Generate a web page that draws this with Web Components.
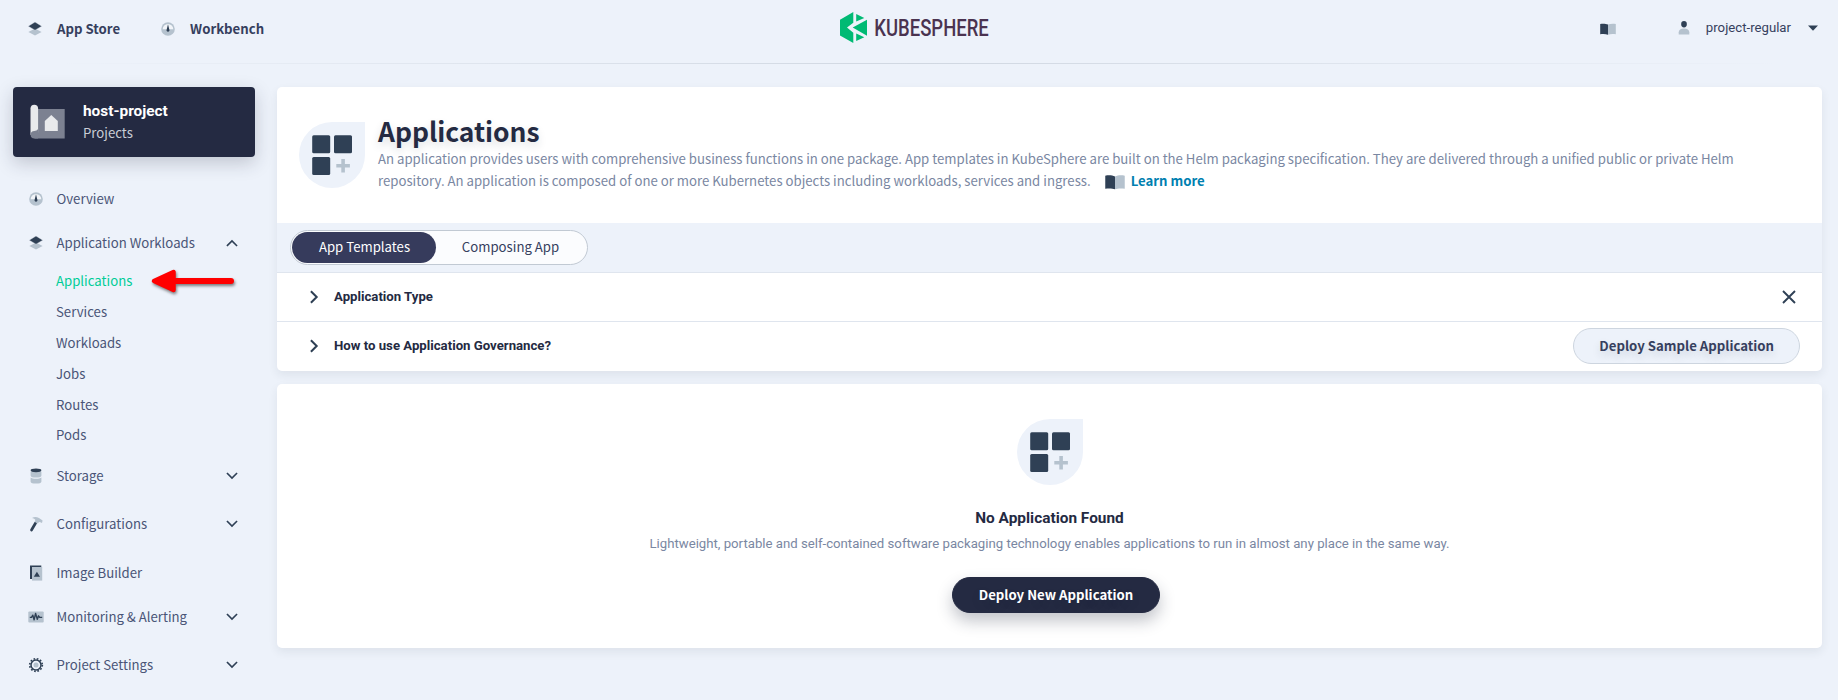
<!DOCTYPE html>
<html lang="en">
<head>
<meta charset="utf-8">
<title>Applications - KubeSphere</title>
<style>
html, body { margin: 0; height: 100%; }
body { background: #edf2fa; overflow: hidden; --noto: "Noto Sans CJK SC", sans-serif; --roboto: Roboto, sans-serif; }
</style>
</head>
<body>
<ks-app></ks-app>
<script>
const D = '#2f4055', L = '#b5c2ce';
const ICONS = {
  layers: [16, `<path d="M8 7.4 14.6 11 8 14.6 1.4 11z" fill="${L}"/><path d="M8 1 14.8 5.2 8 9.2 1.2 5.2z" fill="${D}" stroke="#edf2fa" stroke-width=".4"/>`],
  gauge: [16, `<circle cx="8" cy="8" r="6.8" fill="${L}"/><path d="M2.700 8.300a5.300 5.300 0 0 1 10.600 0z" fill="#f2f5f9"/><path d="M8 3.200 9.300 8.600a1.500 1.500 0 1 1-2.600 0z" fill="${D}"/>`],
  storage: [16, `<path d="M2.600 3.600v4.200c0 1.300 2.300 1.800 5.400 1.800s5.400-.5 5.400-1.800V3.600z" fill="${L}"/><path d="M2.600 9.500c1 .9 3 1.200 5.400 1.200s4.400-.3 5.400-1.200v4.200c0 1.200-2.200 1.900-5.400 1.900s-5.400-.7-5.400-1.900z" fill="${L}"/><ellipse cx="8" cy="2.300" rx="5.400" ry="1.900" fill="${D}"/>`],
  hammer: [16, `<path d="M3.500 14 7.600 7" stroke="${D}" stroke-width="2.700" stroke-linecap="round"/><path d="M4 2c2-1.400 4.600-1.300 7 0l3.600 2.600-.6 2.300-1.600-.6-1.200-.2-1.700 1.400-2.700-1.500.5-2.300C6.300 2.600 5.200 2.300 4 2z" fill="${L}"/>`],
  image: [16, `<path d="M2 .4h11.300v2H4v11.600H2z" fill="${D}"/><path d="M4 2h10.200v13.600H4z" fill="${L}"/><path d="M8.900 6.700l3.100 5H5.800z" fill="${D}"/>`],
  monitor: [16, `<rect x=".3" y="2.400" width="15.400" height="11.200" rx="1" fill="${L}"/><path d="M1.800 8.400h1.700l1.300-2.200 1.300 4.600 1.500-6.400 1.700 6 1.200-3.600 1.200 1.600h2.500" fill="none" stroke="${D}" stroke-width="1.400" stroke-linejoin="round"/>`],
  gear: [16, `<circle cx="8" cy="8" r="6.300" fill="none" stroke="${D}" stroke-width="1.700" stroke-dasharray="1.650 1.650"/><circle cx="8" cy="8" r="5" fill="none" stroke="${D}" stroke-width="1.500"/><circle cx="8" cy="8" r="2.500" fill="${L}"/>`],
  book: [16, `<path d="M.2 2.900C3 2.500 6 2.600 8 3.600v10.200c-2-.8-5-.8-7.800-.5z" fill="${D}"/><path d="M15.800 2.900C13 2.500 10 2.600 8 3.600v10.200c2-.8 5-.8 7.800-.5z" fill="${L}"/>`],
  user: [16, `<rect x="5.200" y="1" width="5.600" height="6.400" rx="2.800" fill="${D}"/><path d="M2.700 14.500v-2.300c0-2.300 2-3.700 5.300-3.700s5.300 1.400 5.300 3.700v2.300z" fill="${L}"/>`],
  down: [16, `<path d="M3.500 5.600 8 10.100l4.500-4.500" fill="none" stroke="${D}" stroke-width="1.600" stroke-linecap="square"/>`],
  up: [16, `<path d="M3.500 10.400 8 5.900l4.500 4.500" fill="none" stroke="${D}" stroke-width="1.600" stroke-linecap="square"/>`],
  right: [16, `<path d="M4.900 2.200 10.700 8l-5.800 5.800" fill="none" stroke="${D}" stroke-width="2"/>`],
  close: [16, `<path d="M2 2l12 12M14 2 2 14" fill="none" stroke="${D}" stroke-width="1.900"/>`],
  caret: [16, `<path d="M3 5.600h10L8 10.800z" fill="${D}"/>`],
  project: [36, `<path d="M9 5h26.700v29.600H5.500z" fill="#7c8191"/><path d="M1.500 31V4.500a3.800 3.800 0 0 1 7.600 0v24z" fill="#e9eaec"/><path d="M9.100 25v9.600H5.400A3.800 3.800 0 0 1 5.400 27a4.600 4.600 0 0 0 3.700-2z" fill="#7c8191"/><path d="M22.300 11 28.800 17v10H15.800V17z" fill="#e9eaec"/>`],
  app: [44, `<g fill="${D}"><rect x="2.200" y="2.200" width="18" height="18" rx="1.500"/><rect x="24" y="2.200" width="18" height="18" rx="1.500"/><rect x="2.200" y="24" width="18" height="18" rx="1.500"/></g><path d="M31.300 26h3.600v5h5v3.600h-5v5h-3.600v-5h-5V31h5z" fill="${L}"/>`]
};
function define(name, html) {
  customElements.define(name, class extends HTMLElement {
    constructor() {
      super();
      const t = document.createElement('template');
      t.innerHTML = typeof html === 'function' ? html(this) : html;
      this.attachShadow({ mode: 'open' }).append(t.content.cloneNode(true));
    }
  });
}
const attr = (el, n, d = '') => el.getAttribute(n) || d;

customElements.define('ks-icon', class extends HTMLElement {
  connectedCallback() {
    if (this.shadowRoot) return;
    const [box, body] = ICONS[attr(this, 'name')], s = attr(this, 'size', '16');
    this.attachShadow({ mode: 'open' }).innerHTML =
      `<style>:host{display:inline-block;flex:none;width:${s}px;height:${s}px}svg{display:block}</style>
       <svg width="${s}" height="${s}" viewBox="0 0 ${box} ${box}">${body}</svg>`;
  }
});

define('ks-logo', `<style>:host{display:block;width:158px;height:36px}svg{display:block;overflow:visible}</style>
<svg width="158" height="36" viewBox="0 0 158 36">
  <path d="M13.300 1v10.800L7 16.500l6.300 5.200V32L0 24.500V8.700z" fill="#00ba74"/>
  <path d="M16.200 3v7.500L24.300 7z M27 8.800v15.900L12.700 16.600z M16.200 22.500v7.500l8.100-3.800z" fill="#00ba74"/>
  <text x="34.300" y="24.900" textLength="114.500" lengthAdjust="spacingAndGlyphs" font-family="Roboto, sans-serif" font-weight="500" font-size="23.500" fill="#4a3350">KUBESPHERE</text>
</svg>`);

define('ks-header', `<style>
:host{display:grid;grid-template-columns:1fr 158px 1fr;height:63px;position:relative;box-sizing:border-box}
:host::after{content:"";position:absolute;left:0;right:0;bottom:-1px;height:1px;background:linear-gradient(90deg,rgba(203,211,222,0) 3%,#d0d7e1 50%,rgba(203,211,222,0) 97%)}
.l,.r{display:flex;align-items:center;height:57px}
.l{padding-left:27px;font:700 13.200px/20px var(--noto);color:#363f5e}
.l ks-icon+span{margin-left:14px}.l span+ks-icon{margin-left:40px}
.r{justify-content:flex-end;padding-right:17px;font:13.200px/20px var(--roboto);color:#363f5e;height:55px}
ks-logo{margin-top:11px}
</style>
<div class="l"><ks-icon name="layers"></ks-icon><span>App Store</span><ks-icon name="gauge"></ks-icon><span>Workbench</span></div>
<ks-logo></ks-logo>
<div class="r"><ks-icon name="book" style="margin:2px 60px 0 0"></ks-icon><ks-icon name="user" style="margin-right:14px"></ks-icon><span style="margin-right:14px">project-regular</span><ks-icon name="caret"></ks-icon></div>`);

define('ks-project-card', `<style>
:host{display:flex;align-items:center;box-sizing:border-box;width:242px;height:70px;margin-left:13px;padding-left:16px;border-radius:4px;background:#242a42;box-shadow:0 6px 18px rgba(36,42,66,.22)}
.t{margin-left:18px}
b{display:block;font:700 15.400px/22px var(--roboto);color:#fff}
span{display:block;font:13.200px/22px var(--noto);color:#c9cdd6}
</style><ks-icon name="project" size="36"></ks-icon><div class="t"><b><slot></slot></b><span><slot name="kind"></slot></span></div>`);

define('ks-nav-item', el => `<style>
:host{display:flex;align-items:center;box-sizing:border-box;height:44px;padding:0 15px 0 28px;font:13.200px/22px var(--noto);color:#4a5577}
.t{flex:1;margin-left:12.500px}
</style><ks-icon name="${attr(el, 'icon')}"></ks-icon><span class="t"><slot></slot></span>${attr(el, 'arrow') ? `<ks-icon name="${attr(el, 'arrow')}"></ks-icon>` : ''}`);

define('ks-sub-item', `<style>
:host{display:block;height:31px;padding-left:56px;font:13.200px/31px var(--noto);color:#4a5577}
:host([active]){color:#00cd97}
</style><slot></slot>`);

define('ks-pointer', `<style>:host{position:absolute;left:148px;top:180px}svg{display:block;overflow:visible;filter:drop-shadow(1.500px 2px 1.500px rgba(60,60,60,.65))}</style>
<svg width="90" height="28" viewBox="0 0 90 28"><path d="M6 14 25.500 5v18z" fill="#f00" stroke="#f00" stroke-width="4.500" stroke-linejoin="round"/><path d="M24 14h59" stroke="#f00" stroke-width="6" stroke-linecap="round"/></svg>`);

define('ks-sidebar', `<style>:host{display:block;width:255px;position:relative}nav{padding-top:20px}</style>
<ks-project-card>host-project<span slot="kind">Projects</span></ks-project-card>
<nav>
<ks-nav-item icon="gauge">Overview</ks-nav-item>
<ks-nav-item icon="layers" arrow="up">Application Workloads</ks-nav-item>
<ks-sub-item active>Applications</ks-sub-item><ks-sub-item>Services</ks-sub-item><ks-sub-item>Workloads</ks-sub-item>
<ks-sub-item>Jobs</ks-sub-item><ks-sub-item>Routes</ks-sub-item><ks-sub-item style="margin-top:-1px">Pods</ks-sub-item>
<ks-nav-item icon="storage" arrow="down" style="margin-top:4px">Storage</ks-nav-item>
<ks-nav-item icon="hammer" arrow="down" style="margin-top:4px">Configurations</ks-nav-item>
<ks-nav-item icon="image" style="margin-top:5px">Image Builder</ks-nav-item>
<ks-nav-item icon="monitor" arrow="down">Monitoring &amp; Alerting</ks-nav-item>
<ks-nav-item icon="gear" arrow="down" style="margin-top:4px">Project Settings</ks-nav-item>
</nav><ks-pointer></ks-pointer>`);

define('ks-card', `<style>:host{display:block;background:#fff;border-radius:5px;box-shadow:0 4px 10px rgba(36,46,66,.08);overflow:hidden}</style><slot></slot>`);

define('ks-badge', `<style>:host{display:grid;place-items:center;flex:none;width:66px;height:66px;border-radius:33px 0 33px 33px;background:#edf2fa}</style><ks-icon name="app" size="44"></ks-icon>`);

define('ks-button', `<style>
:host{display:block;box-sizing:border-box;height:36px;padding:0 25px;border:1px solid #cdd5df;border-radius:18px;background:#edf2fa;font:700 13.200px/33px var(--noto);color:#363f5e;text-shadow:0 4px 8px rgba(36,46,66,.15);white-space:nowrap}
:host([primary]){padding:0 26px;border-color:#242a42;background:#242a42;color:#fff;box-shadow:0 8px 16px rgba(36,42,66,.28)}
</style><slot></slot>`);

define('ks-banner', `<style>
:host{display:flex;height:136px;box-sizing:border-box;padding:35px 0 0 22px}
.t{margin-left:13px;width:1370px;margin-top:-8px}
h1{margin:0;font:700 26.400px/34px var(--noto);color:#242a42;text-shadow:0 4px 8px rgba(36,46,66,.15)}
p{margin:0;font:13.200px/22px var(--noto);color:#7a87a2}
.line{display:flex;align-items:center;height:22px;white-space:nowrap}
a{color:#0080b0;font-weight:700}
ks-icon{margin:2px 6px 0 14px}
</style><ks-badge></ks-badge><div class="t"><h1>Applications</h1>
<p><span class="line">An application provides users with comprehensive business functions in one package. App templates in KubeSphere are built on the Helm packaging specification. They are delivered through a unified public or private Helm</span>
<span class="line"><span>repository. An application is composed of one or more Kubernetes objects including workloads, services and ingress.</span><ks-icon name="book" size="20"></ks-icon><a>Learn more</a></span></p></div>`);

define('ks-tabs', `<style>
:host{display:flex;align-items:center;height:49px;padding-left:13px;background:#edf2fa;border-bottom:1px solid #dfe5ee}
.g{display:flex;box-sizing:border-box;height:35px;width:298px;border:1px solid #c1c9d3;border-radius:18px;background:#fbfcfe;padding:1px;font:13.200px/30px var(--noto);text-align:center;color:#363f5e}
.on{box-sizing:border-box;width:144px;height:31px;padding-left:1px;border-radius:16px;background:#363b5c;color:#fff}
.off{width:149px}
</style><div class="g"><span class="on">App Templates</span><span class="off">Composing App</span></div>`);

define('ks-row', `<style>
:host{display:flex;align-items:center;height:48px;padding:0 22px 0 29px;font:700 13.200px/20px var(--roboto);color:#242a42}
:host(:not(:last-child)){border-bottom:1px solid #dfe5ee}
.t{flex:1;margin-left:12px}
</style><ks-icon name="right"></ks-icon><span class="t"><slot></slot></span><slot name="action"></slot>`);

define('ks-empty', `<style>
:host{display:flex;flex-direction:column;align-items:center;height:264px;box-sizing:border-box;padding-top:35px}
h2{margin:21px 0 0;font:700 15.400px/24px var(--roboto);color:#242a42}
p{margin:4px 0 0;font:13.200px/20px var(--roboto);color:#7a87a2}
ks-button{margin:23px 0 0 13px}
</style><ks-badge></ks-badge><h2>No Application Found</h2>
<p>Lightweight, portable and self-contained software packaging technology enables applications to run in almost any place in the same way.</p>
<ks-button primary>Deploy New Application</ks-button>`);

define('ks-app', `<style>
:host{display:block;height:700px}
.b{display:flex;padding:24px 16px 0 0}
main{flex:1;margin-left:22px;display:flex;flex-direction:column;gap:13px;min-width:0}
</style><ks-header></ks-header><div class="b"><ks-sidebar></ks-sidebar><main>
<ks-card><ks-banner></ks-banner><ks-tabs></ks-tabs><div><ks-row>Application Type<ks-icon slot="action" name="close" style="margin-right:3px"></ks-icon></ks-row>
<ks-row style="height:48px;padding-bottom:1px">How to use Application Governance?<ks-button slot="action">Deploy Sample Application</ks-button></ks-row></div></ks-card>
<ks-card><ks-empty></ks-empty></ks-card></main></div>`);
</script>
</body>
</html>
